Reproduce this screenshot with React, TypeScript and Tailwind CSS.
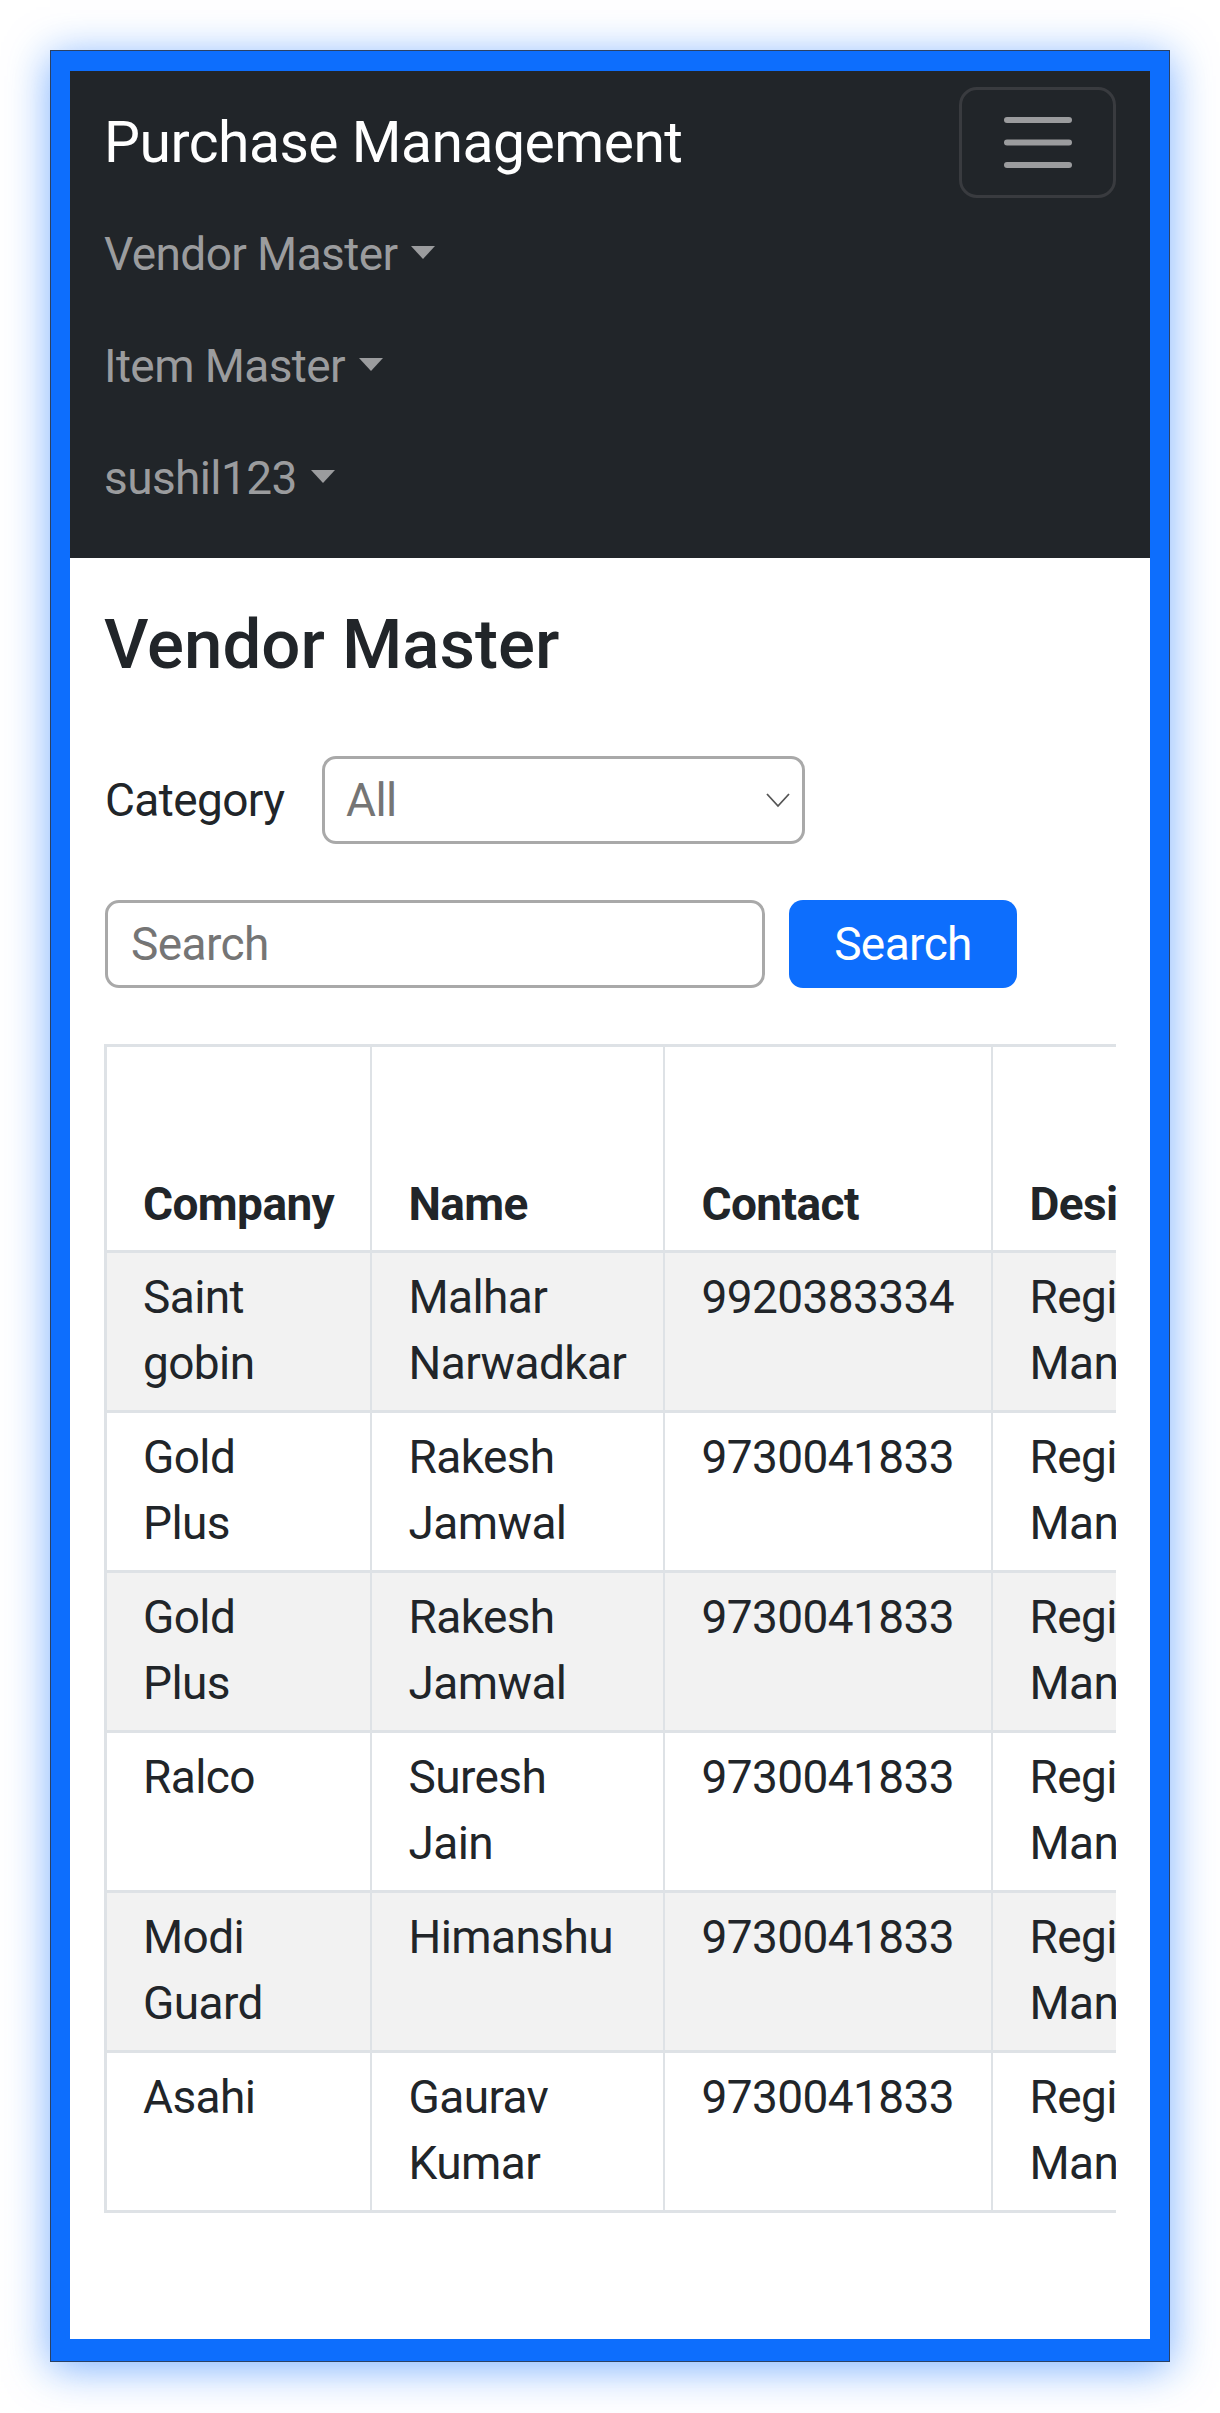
import React from 'react';

const navItems = ['Vendor Master', 'Item Master', 'sushil123'];

const vendors: string[][][] = [
  [['Saint', 'gobin'], ['Malhar', 'Narwadkar'], ['9920383334'], ['Regional', 'Manager']],
  [['Gold', 'Plus'], ['Rakesh', 'Jamwal'], ['9730041833'], ['Regional', 'Manager']],
  [['Gold', 'Plus'], ['Rakesh', 'Jamwal'], ['9730041833'], ['Regional', 'Manager']],
  [['Ralco'], ['Suresh', 'Jain'], ['9730041833'], ['Regional', 'Manager']],
  [['Modi', 'Guard'], ['Himanshu'], ['9730041833'], ['Regional', 'Manager']],
  [['Asahi'], ['Gaurav', 'Kumar'], ['9730041833'], ['Regional', 'Manager']],
];

const headers = ['Company', 'Name', 'Contact', 'Designation'];

const Caret = () => (
  <span className="inline-block ml-[14px] align-[11px] w-0 h-0 border-t-[13px] border-t-[#9b9c9e] border-x-[12.5px] border-x-transparent" />
);

const App: React.FC = () => {
  return (
    <div className="w-[1220px] h-[2413px] bg-white pt-[50px] pl-[50px] font-[Roboto,sans-serif] tracking-[-0.6px]">
      <div className="w-[1120px] h-[2312px] border border-[#2b4163] bg-[#0d6efd] pt-[20px] px-[19px] shadow-[0_6px_40px_rgba(13,110,253,0.55)]">
        <div className="h-[2268px] bg-white">
          {/* navbar */}
          <nav className="bg-[#212529] h-[487px] pl-[34px] pr-[34px] pt-[16px]">
            <div className="flex items-center justify-between h-[111px]">
              <span className="text-[57px] leading-none text-white tracking-[-0.5px]">Purchase Management</span>
              <button className="w-[157px] h-[111px] border-[3px] border-[#393b3f] rounded-[18px] flex items-center justify-center">
                <svg width="68" height="51" viewBox="0 0 68 51">
                  <g stroke="#9b9c9e" strokeWidth="6" strokeLinecap="round">
                    <line x1="3" y1="3" x2="65" y2="3" />
                    <line x1="3" y1="25.5" x2="65" y2="25.5" />
                    <line x1="3" y1="48" x2="65" y2="48" />
                  </g>
                </svg>
              </button>
            </div>
            {navItems.map(n => (
              <div key={n} className="h-[112px] leading-[112px] text-[46px] text-[#9b9c9e] whitespace-nowrap">
                {n}<Caret />
              </div>
            ))}
          </nav>

          <main className="px-[34px] pt-[47px]">
            <h2 className="text-[69px] font-medium leading-[80px] text-[#212529] tracking-normal">Vendor Master</h2>

            <div className="mt-[71px] flex items-center h-[88px]">
              <label className="w-[218px] pl-[1px] text-[46px] text-[#212529]">Category</label>
              <div className="w-[483px] h-[88px] border-[3px] border-[#a9a9a9] rounded-[14px] flex items-center justify-between pl-[21px] pr-[12px]">
                <span className="text-[46px] text-[#757575]">All</span>
                <svg width="24" height="15" viewBox="0 0 24 15">
                  <polyline points="1,1 12,13 23,1" fill="none" stroke="#555" strokeWidth="1.8" />
                </svg>
              </div>
            </div>

            <div className="mt-[56px] flex gap-[24px] h-[88px] pl-[1px]">
              <div className="w-[660px] h-[88px] border-[3px] border-[#a9a9a9] rounded-[14px] flex items-center pl-[23px]">
                <span className="text-[46px] text-[#757575]">Search</span>
              </div>
              <button className="w-[228px] h-[88px] bg-[#0d6efd] rounded-[14px] text-[46px] text-white flex items-center justify-center">
                Search
              </button>
            </div>

            <div className="mt-[56px] w-[1012px] overflow-hidden">
              <table className="border-collapse table-fixed w-[1250px] text-[46px] leading-[66px] text-[#212529]">
                <colgroup>
                  <col className="w-[265px]" />
                  <col className="w-[293px]" />
                  <col className="w-[328px]" />
                  <col className="w-[364px]" />
                </colgroup>
                <thead>
                  <tr className="h-[206px]">
                    {headers.map((h, i) => (
                      <th
                        key={h}
                        className={`border-[#dee2e6] border-y-[3px] border-x-[2px] ${i === 0 ? 'border-l-[3px] pl-[36px]' : 'pl-[37px]'} text-left align-bottom font-bold pr-[16px] pb-[13px] whitespace-nowrap`}
                      >
                        {h}
                      </th>
                    ))}
                  </tr>
                </thead>
                <tbody>
                  {vendors.map((row, r) => (
                    <tr key={r} className={r % 2 === 0 ? 'bg-[#f2f2f2]' : 'bg-white'}>
                      {row.map((cell, i) => (
                        <td
                          key={i}
                          className={`border-[#dee2e6] border-y-[3px] border-x-[2px] ${i === 0 ? 'border-l-[3px] pl-[36px]' : 'pl-[37px]'} align-top pr-[16px] pt-[11px] pb-[14px] whitespace-nowrap`}
                        >
                          {cell.map(line => (
                            <div key={line}>{line}</div>
                          ))}
                        </td>
                      ))}
                    </tr>
                  ))}
                </tbody>
              </table>
            </div>
          </main>
        </div>
      </div>
    </div>
  );
};

export default App;
